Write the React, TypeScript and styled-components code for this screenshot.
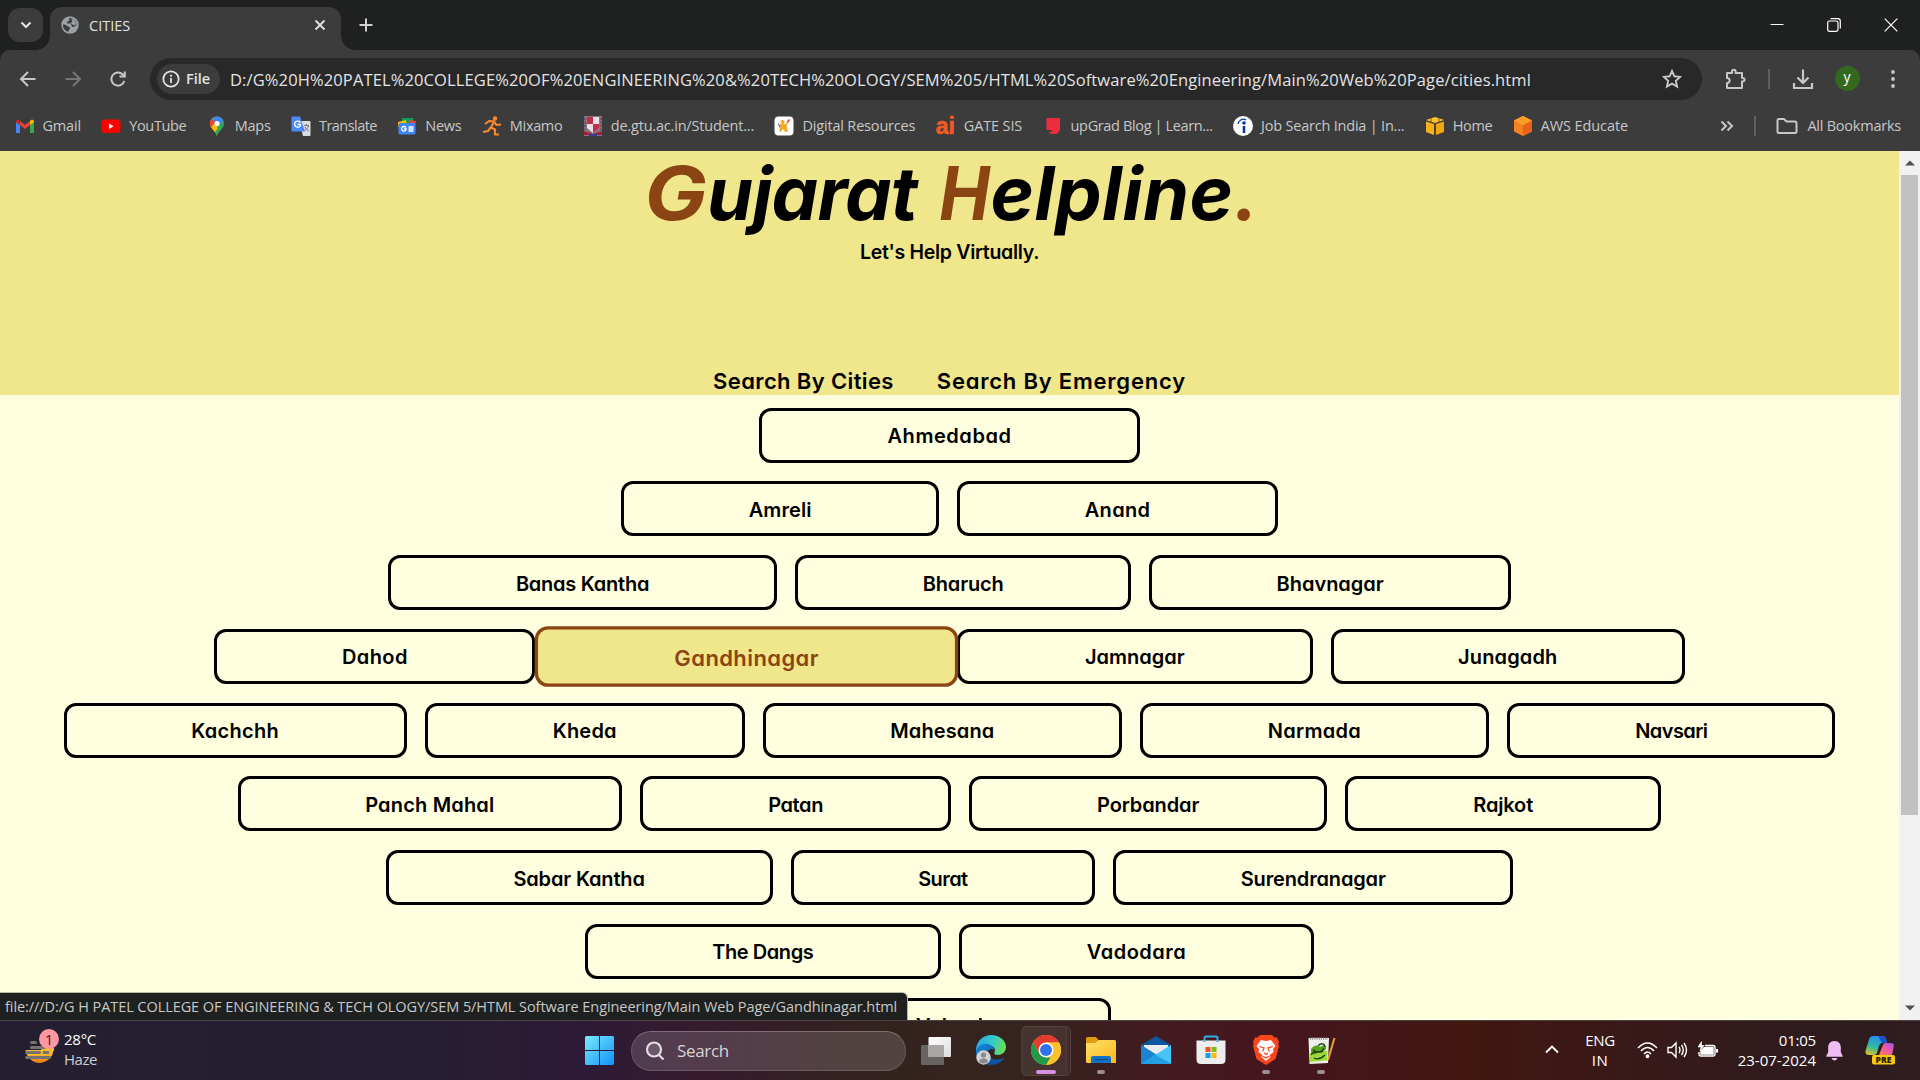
import React, { useLayoutEffect, useRef, useState } from "react";
import styled, { createGlobalStyle, css } from "styled-components";

const GlobalStyle = createGlobalStyle`
  * { box-sizing: border-box; }
  html, body { margin: 0; padding: 0; background: #1f2120; overflow: hidden; }
`;

const uiFont = `"Open Sans", "Noto Sans", sans-serif`;

/* ---------- text that spreads its letters over a given width ---------- */

const FitSpan = styled.span`
  display: inline-block;
  white-space: pre;
`;

function Fit({ text, width }: { text: string; width: number }) {
  const ref = useRef<HTMLSpanElement>(null);
  const [spacing, setSpacing] = useState(0);
  useLayoutEffect(() => {
    if (ref.current) {
      setSpacing((width - ref.current.offsetWidth) / text.length);
    }
  }, [text, width]);
  return (
    <FitSpan ref={ref} style={{ letterSpacing: spacing }}>
      {text}
    </FitSpan>
  );
}

/* ---------- browser frame ---------- */

const Screen = styled.div`
  width: 1920px;
  height: 1080px;
  display: flex;
  flex-direction: column;
  overflow: hidden;
  font-family: ${uiFont};
  background: #1f2120;
`;

const TabStrip = styled.div`
  height: 50px;
  flex: none;
  display: flex;
  align-items: flex-start;
  background: #1f2120;
`;

const TabSearch = styled.div`
  width: 35px;
  height: 34px;
  margin: 8px 7px 0 8px;
  border-radius: 12px;
  background: #3c3c3c;
  display: flex;
  align-items: center;
  justify-content: center;
`;

const Tab = styled.div`
  position: relative;
  width: 291px;
  height: 43px;
  margin-top: 7px;
  padding: 0 12px 7px 11px;
  border-radius: 12px 12px 0 0;
  background: #3c3c3c;
  display: flex;
  align-items: center;
  color: #e3e3e3;
  font-size: 14.5px;

  &::before,
  &::after {
    content: "";
    position: absolute;
    bottom: 0;
    width: 14px;
    height: 14px;
  }
  &::before {
    left: -14px;
    background: radial-gradient(circle at 0 0, transparent 13.5px, #3c3c3c 14px);
  }
  &::after {
    right: -14px;
    background: radial-gradient(circle at 100% 0, transparent 13.5px, #3c3c3c 14px);
  }
`;

const TabTitle = styled.div`
  flex: 1;
  margin-left: 10px;
`;

const NewTab = styled.div`
  margin: 17px 0 0 17px;
  height: 16px;
  display: flex;
`;

const WindowButtons = styled.div`
  margin-left: auto;
  height: 50px;
  display: flex;
  align-items: center;
  padding-right: 22px;
  gap: 43px;
`;

const Toolbar = styled.div`
  height: 101px;
  flex: none;
  background: #3c3c3c;
  border-radius: 10px 10px 0 0;
`;

const AddressRow = styled.div`
  height: 58px;
  display: flex;
  align-items: center;
  padding-left: 18px;
`;

const NavIcons = styled.div`
  width: 132px;
  display: flex;
  gap: 25px;
`;

const AddressBar = styled.div`
  width: 1552px;
  height: 42px;
  border-radius: 21px;
  background: #282828;
  display: flex;
  align-items: center;
  padding: 0 20px 0 7px;
`;

const FileChip = styled.div`
  width: 63px;
  height: 30px;
  border-radius: 15px;
  background: #3c3c3c;
  display: flex;
  align-items: center;
  padding: 0 0 1px 5px;
  gap: 6px;
  color: #e3e3e3;
  font-size: 14.5px;
  font-weight: 600;
`;

const UrlText = styled.div`
  flex: 1;
  margin-left: 10px;
  color: #e3e3e3;
  font-size: 16.5px;
  white-space: nowrap;
`;

const ToolIcons = styled.div`
  display: flex;
  align-items: center;
  margin-left: 22px;
`;

const Avatar = styled.div`
  width: 25px;
  height: 25px;
  margin: -1px 30px 0 21px;
  border-radius: 50%;
  background: #33691e;
  color: #fff;
  font-size: 14px;
  line-height: 22px;
  text-align: center;
`;

const Divider = styled.div<{ $h: number; $gap: string; $w?: number }>`
  width: ${(p) => p.$w ?? 1.5}px;
  height: ${(p) => p.$h}px;
  margin: ${(p) => p.$gap};
  background: #606060;
`;

const BookmarkRow = styled.div`
  height: 35px;
  display: flex;
  align-items: center;
  padding: 0 19px 0 14.500px;
  gap: 20.4px;
  color: #c7c7c7;
  font-size: 14.5px;
`;

const Bookmark = styled.div`
  display: flex;
  align-items: center;
  gap: 8px;
  svg { flex: none; }
`;

const BookmarkEnd = styled.div`
  margin-left: auto;
  display: flex;
  align-items: center;
`;

const AllBookmarks = styled.div`
  margin-left: 9px;
`;

/* ---------- page ---------- */

const Viewport = styled.div`
  position: relative;
  height: 869px;
  flex: none;
  display: flex;
`;

const Page = styled.main`
  width: 1899px;
  height: 869px;
  background: #ffffdf;
  font-family: Inter, "Open Sans", sans-serif;
  font-feature-settings: "cv11" 1, "ss03" 1;
  color: #000;
`;

const Header = styled.header`
  height: 244px;
  background: #f0e68c;
  display: flex;
  flex-direction: column;
  align-items: center;
`;

const Title = styled.h1`
  margin: 0;
  height: 88px;
  padding-left: 4px;
  display: flex;
  font-size: 74px;
  line-height: 84px;
  font-weight: 700;
  font-style: italic;
`;

const Accent = styled.span<{ $stretch?: number }>`
  color: #8b4513;
  transform: scaleX(${(p) => p.$stretch ?? 1});
`;

const WordGap = styled.span`
  width: 20px;
`;

const Tagline = styled.p`
  margin: 0;
  height: 26px;
  line-height: 26px;
  font-size: 19.5px;
  font-weight: 600;
`;

const Nav = styled.nav`
  margin-top: auto;
  height: 30px;
  display: flex;
  gap: 43px;
  font-size: 22px;
  line-height: 32px;
  font-weight: 600;
`;

const CityList = styled.section`
  height: 625px;
  overflow: hidden;
  padding-top: 12.6px;
  display: flex;
  flex-direction: column;
  gap: 18.75px;
`;

const CityRow = styled.div`
  flex: none;
  display: flex;
  justify-content: center;
  gap: 18.3px;
`;

const CityButton = styled.a<{ $w: number; $hover?: boolean }>`
  flex: none;
  width: ${(p) => p.$w}px;
  height: 55px;
  padding-top: 2px;
  border: 3px solid #000;
  border-radius: 12px;
  display: flex;
  align-items: center;
  justify-content: center;
  font-size: 20px;
  font-weight: 600;
  ${(p) =>
    p.$hover &&
    css`
      z-index: 1;
      color: #8b4513;
      background: #f0e68c;
      border-color: #8b4513;
      transform: scale(1.1);
    `}
`;

const Scrollbar = styled.div`
  width: 21px;
  background: #f1f1f1;
  display: flex;
  flex-direction: column;
  align-items: center;
`;

const ScrollArrow = styled.div`
  width: 21px;
  height: 24px;
  display: flex;
  align-items: center;
  justify-content: center;
`;

const ScrollThumb = styled.div`
  width: 17px;
  height: 640px;
  margin-bottom: auto;
  background: #c1c1c1;
`;

const StatusBubble = styled.div`
  position: absolute;
  left: 0;
  bottom: 0;
  width: 907px;
  height: 27px;
  padding-left: 5px;
  border-radius: 0 5px 0 0;
  background: #1f2120;
  box-shadow: 0 0 0 1px #b9b99f;
  color: #c7c7c7;
  font-size: 14.5px;
  line-height: 27px;
`;

/* ---------- taskbar ---------- */

const Taskbar = styled.footer`
  position: relative;
  height: 60px;
  flex: none;
  display: flex;
  align-items: center;
  border-top: 1px solid #4d4446;
  color: #fff;
  background: linear-gradient(90deg, #241f30 0, #261e32 430px, #2d1a37 580px, #371b2d 700px, #33231f 880px,
    #35231f 1020px, #44191f 1190px, #45161f 1290px, #41170f 1470px, #38191a 1640px, #2e1b1e 1830px, #2f1d20 1920px);
`;

const Weather = styled.div`
  width: 585px;
  padding: 0 0 4px 24px;
  display: flex;
  align-items: center;
`;

const Lines = styled.div<{ $align?: string }>`
  display: flex;
  flex-direction: column;
  align-items: ${(p) => p.$align ?? "flex-start"};
  font-size: 15px;
  line-height: 20px;
`;

const Dim = styled.span`
  color: #cfcdd2;
`;

const SearchBox = styled.div`
  width: 275px;
  height: 40px;
  margin: 0 15px 0 17px;
  padding-left: 13px;
  border-radius: 20px;
  border: 1px solid rgba(255, 255, 255, 0.13);
  border-top-color: rgba(255, 255, 255, 0.25);
  background: rgba(255, 255, 255, 0.15);
  display: flex;
  align-items: center;
  gap: 12px;
  color: #d9d2d6;
  font-size: 17px;
`;

const Apps = styled.div`
  margin-left: 15px;
  display: flex;
  gap: 5px;
`;

const AppSlot = styled.div<{ $active?: boolean }>`
  width: 50px;
  height: 50px;
  border-radius: 6px;
  display: flex;
  flex-direction: column;
  align-items: center;
  padding-top: 9px;
  ${(p) =>
    p.$active &&
    css`
      padding-top: 8px;
      border: 1px solid rgba(255, 255, 255, 0.08);
      background: linear-gradient(90deg, rgba(255, 255, 255, 0.08) 44px, rgba(255, 255, 255, 0.14) 44px, rgba(255, 255, 255, 0.04) 46px);
    `}
`;

const RunMark = styled.div<{ $w: number; $c: string }>`
  width: ${(p) => p.$w}px;
  height: 4px;
  margin-top: 5px;
  border-radius: 2px;
  background: ${(p) => p.$c};
`;

const Tray = styled.div`
  margin-left: auto;
  padding: 0 25px 2px 0;
  display: flex;
  align-items: center;
`;

const Language = styled.div`
  margin-left: 26px;
`;

const TrayIcons = styled.div`
  display: flex;
  align-items: center;
  gap: 9px;
  margin: 1px 20px 0 22px;
`;

const Bell = styled.svg`
  margin: 3px 22px 0 10px;
`;

/* ---------- icons ---------- */

const stroke = { fill: "none", stroke: "#c7c7c7", strokeWidth: 2 } as const;

const Back = () => (
  <svg width="20" height="20" viewBox="0 0 20 20" {...stroke}><path d="M17.500 10H3M10 3l-7 7 7 7" /></svg>
);
const Forward = () => (
  <svg width="20" height="20" viewBox="0 0 20 20" {...stroke} stroke="#777"><path d="M2.500 10H17M10 3l7 7-7 7" /></svg>
);
const Reload = () => (
  <svg width="20" height="20" viewBox="0 0 20 20" {...stroke}>
    <path d="M16.300 12A6.600 6.600 0 1 1 14.600 5.300L16.500 7.200" /><path d="M16.800 2.500V7.500H11.500" />
  </svg>
);

const Globe = () => (
  <svg width="18" height="18" viewBox="0 0 18 18">
    <circle cx="9" cy="9" r="8.700" fill="#9aa0a6" />
    <path d="M2 8.500c1.500 0 3 .3 4.200 1.500.8 1 2.800.3 2.800 2.200 0 1.300-1.500 1-1.500 3.600C4 15 1.800 12 2 8.500z" fill="#3c3c3c" />
    <path d="M8.500 2C7.500 3 9 4 7.800 5S5.500 5.500 6 7c.5 1.300 3 .2 4 1.300 1.200 1.200 0 2.200 1.500 2.600 1.500.3 1.500-1.500 3.800-1.200C16 5 12.500 2 8.500 2z" fill="#3c3c3c" />
    <path d="M10.500 2.500c-.5 1.500 1.500 2 .5 3.500s-2 .5-2.500 1 2 .3 3 1.500 2 .8 3.500 0C15 5 13 3 10.500 2.500z" fill="#9aa0a6" />
  </svg>
);

const bookmarkIcons: Record<string, React.ReactNode> = {
  gmail: (
    <>
      <path d="M1 5v12h4V9l5 4 5-4v8h4V5l-2-1.500L10 9 3 3.500z" fill="#ea4335" />
      <path d="M1 6v11h4V9z" fill="#4285f4" /><path d="M15 9v8h4V6z" fill="#34a853" />
      <path d="M15 9V5l2-1.500L19 5v1z" fill="#fbbc04" /><path d="M1 6V5l2-1.500L5 5v4z" fill="#c5221f" />
    </>
  ),
  youtube: (
    <><rect x=".5" y="3.500" width="19" height="13.500" rx="3.500" fill="#f00" /><path d="M8 7.500v5.500l4.700-2.750z" fill="#fff" /></>
  ),
  maps: (
    <>
      <path d="M10 20c-.9-4.500-7-7.500-7-12.500A7 7 0 0 1 10 .5z" fill="#fbbc04" />
      <path d="M10 .5a7 7 0 0 1 7 7C17 12.500 10.900 15.500 10 20l-2.500-5.500z" fill="#34a853" />
      <path d="M4.500 3.500A7 7 0 0 1 10 .5c3 0 5 1.500 6.300 4L10 12z" fill="#4285f4" />
      <path d="M3 7.500c0-1.500.5-3 1.500-4.200L10 7l-5.500 5C3.500 10.700 3 9 3 7.500z" fill="#ea4335" />
      <path d="M4 11l4-4 3 5-3 4z" fill="#fbbc04" /><circle cx="10" cy="7.500" r="2.600" fill="#fff" />
    </>
  ),
  translate: (
    <>
      <path d="M8 5h10.500a1 1 0 0 1 1 1v13a1 1 0 0 1-1 1H12z" fill="#dadce0" />
      <path d="M1.500.5H9l5 15H1.500a1 1 0 0 1-1-1v-13a1 1 0 0 1 1-1z" fill="#4c8bf5" />
      <path d="M9.500 6.800A3.100 3.100 0 1 0 9.500 9.500V8.500H6.500" fill="none" stroke="#fff" strokeWidth="1.300" />
      <path d="M13 9.500h5M15.500 8v1.500M17.500 9.500c-.5 2.500-2 4-3.500 5M14 11c.7 1.700 2 3 4 4" stroke="#777" fill="none" />
    </>
  ),
  news: (
    <>
      <path d="M5 2h11v6H5z" fill="#0f9d58" /><path d="M1 6l8-2 1 5-9 2z" fill="#fbbc04" /><path d="M12 4l7 1-1 5-6-1z" fill="#ea4335" />
      <rect x="1.500" y="7" width="17" height="11.500" rx="1.500" fill="#4285f4" />
      <path d="M8.800 11.500a2.300 2.300 0 1 0 .4 1.500H7M11.500 11h5M11.500 13h5M11.500 15h5" stroke="#fff" strokeWidth="1.300" fill="none" />
    </>
  ),
  mixamo: (
    <>
      <circle cx="13" cy="2.500" r="2.200" fill="#f7892b" />
      <path d="M3 8l4-3 5 .5-3 6 4 2v6M9 11l-3 4-5 1M12 6l2.500 3L19 8.500M17 18.500h-4" stroke="#f7892b" strokeWidth="2.100" fill="none" />
    </>
  ),
  gtu: (
    <>
      <path d="M1 0h18v20H1z" fill="#87727d" /><path d="M4 1h12v11l-6 5-6-5z" fill="#eadfe2" />
      <path d="M4 1h6v7H4zM10 8h6v4l-6 5z" fill="#bd3048" /><path d="M1 15l9 3 9-3v4H1z" fill="#a0203a" /><path d="M6 18h8v2H6z" fill="#393c9c" />
      <path d="M2 2v12M18 2v12" stroke="#5d4c64" strokeWidth="1.500" strokeDasharray="2 1.500" />
    </>
  ),
  digital: (
    <>
      <rect x=".5" y=".5" width="19" height="19" rx="4" fill="#fff" />
      <circle cx="8.500" cy="6" r="2" fill="#f5a623" />
      <path d="M5.500 9l3-1.500 3 .5 3-2.500-2 4.500 1.500 5.500-2.500.5-2.500-3-2.500 3-1.500-1 1.500-4z" fill="#f5a623" /><path d="M13 6.500l2.500-3" stroke="#e33" strokeWidth="1.500" /><path d="M4.500 7.500l1.500 4" stroke="#555" />
    </>
  ),
  upgrad: <path d="M3.500 2h13.500v10.500A5.500 5.500 0 0 1 11.500 18C9 18 7 17.800 5.500 16.500c2 0 3.500-.8 3.500-2.500H3.500z" fill="#ee2c3c" />,
  job: (
    <>
      <circle cx="10" cy="10" r="10" fill="#fff" /><circle cx="11" cy="7" r="1.800" fill="#003a9b" />
      <path d="M11 10v7" stroke="#003a9b" strokeWidth="2.600" /><path d="M5 8c.5-4 5-6 8-4" stroke="#003a9b" fill="none" strokeWidth="1.300" />
    </>
  ),
  home: (
    <>
      <path d="M1 4l9-3 9 3-9 3z" fill="#ffc12e" /><path d="M1 5.500l8 2.500v11l-8-3z" fill="#f5b01c" /><path d="M19 5.500L11 8v11l8-3z" fill="#f0a80e" />
      <path d="M6 2.500v4M14 2.500v4M10 7v12" stroke="#6b4b00" strokeWidth=".8" />
    </>
  ),
  aws: (
    <>
      <path d="M10 0l9 4.500v11L10 20l-9-4.500v-11z" fill="#f58220" /><path d="M10 9l9-4.500v11L10 20z" fill="#e8621b" /><path d="M10 0l9 4.500L10 9 1 4.500z" fill="#ff9d2a" />
    </>
  ),
};

const AiMark = styled.span`
  width: 20px;
  color: #f15a24;
  font-family: "Liberation Sans", sans-serif;
  font-weight: 700;
  font-size: 23px;
  line-height: 20px;
  -webkit-text-stroke: 0.6px #f15a24;
`;

const bookmarks = [
  { icon: "gmail", text: "Gmail", w: 38 },
  { icon: "youtube", text: "YouTube", w: 57.5 },
  { icon: "maps", text: "Maps", w: 36 },
  { icon: "translate", text: "Translate", w: 58 },
  { icon: "news", text: "News", w: 36 },
  { icon: "mixamo", text: "Mixamo", w: 53 },
  { icon: "gtu", text: "de.gtu.ac.in/Student...", w: 143.5 },
  { icon: "digital", text: "Digital Resources", w: 113 },
  { icon: "ai", text: "GATE SIS", w: 58 },
  { icon: "upgrad", text: "upGrad Blog | Learn...", w: 142 },
  { icon: "job", text: "Job Search India | In...", w: 143 },
  { icon: "home", text: "Home", w: 39.5 },
  { icon: "aws", text: "AWS Educate", w: 87 },
];

/* ---------- taskbar app icons ---------- */

const EdgeIcon = () => (
  <svg width="30" height="30" viewBox="0 0 30 30">
    <defs>
      <linearGradient id="eg1" x1="0" x2="1" y1=".3" y2=".5"><stop offset="0" stopColor="#2ca6e8" /><stop offset=".55" stopColor="#35c9c8" /><stop offset="1" stopColor="#6be04f" /></linearGradient>
      <linearGradient id="eg2" x1="0" x2=".6" y1="0" y2="1"><stop offset="0" stopColor="#1689dc" /><stop offset="1" stopColor="#0c4f9e" /></linearGradient>
    </defs>
    <path d="M0 14C1 5 8 0 15 0c9 0 15 6 15 12 0 5-4 8-8.500 8-3 0-4-1.500-3-3 1.500-3-.5-6-5-6-6 0-11 3-13.500 8z" fill="url(#eg1)" />
    <path d="M0 16C2 10 7 8 12 9c4 .8 6 4 6 6-2-2-5-1-6 1.500-1 4 3 8 8 8 4 0 7-1.500 8-1.500C26 27 21 30 15 30 6 30-1 24 0 16z" fill="url(#eg2)" />
    <circle cx="7.500" cy="22.500" r="7.200" fill="#d2d2d2" /><circle cx="7.500" cy="20" r="2.600" fill="#8a8a8a" /><path d="M3 27c0-5 9-5 9 0-3 2-6 2-9 0z" fill="#8a8a8a" />
  </svg>
);
const ChromeIcon = () => (
  <svg width="30" height="30" viewBox="0 0 30 30">
    <circle cx="15" cy="15" r="15" fill="#fbc12d" />
    <path d="M15 15L8.500 18.800 2 7.500A15 15 0 0 1 28 7.500H15z" fill="#e33b2e" />
    <path d="M2 7.500L8.500 18.800 15 22.500h6L15 30A15 15 0 0 1 2 7.500z" fill="#229a48" />
    <path d="M21.500 18.800L15 30A15 15 0 0 0 28 7.500H15z" fill="#fbc12d" />
    <circle cx="15" cy="15" r="7.500" fill="#fff" /><circle cx="15" cy="15" r="6" fill="#2f73ea" />
  </svg>
);
const FolderIcon = () => (
  <svg width="30" height="30" viewBox="0 0 30 30">
    <defs><linearGradient id="fo" x1="0" x2="1" y1="0" y2="1"><stop stopColor="#ffdf6b" /><stop offset="1" stopColor="#fcb817" /></linearGradient></defs>
    <path d="M0 3.500Q0 2 1.500 2H10l3 3.500H15V12H0z" fill="#e09b10" />
    <path d="M0 8h9l4-3h15.500q1.500 0 1.500 1.500V28H1.500Q0 28 0 26.500z" fill="url(#fo)" />
    <path d="M5 28v-5q0-2 2-2h16q2 0 2 2v5z" fill="#1172c4" /><path d="M8.500 24.500h13" stroke="#0a4e8f" strokeWidth="1.200" />
  </svg>
);
const MailIcon = () => (
  <svg width="30" height="30" viewBox="0 0 30 30">
    <path d="M0 10L15 1l15 9v6H0z" fill="#0d579f" /><path d="M3 10h24v8l-12 6-12-6z" fill="#ececec" />
    <path d="M0 10l30 19H1.500Q0 29 0 27.500z" fill="#2093dd" /><path d="M30 10L14 20l16 9z" fill="#45c4f5" /><path d="M0 10l15 9.500L0 29z" fill="#1c85d3" /><path d="M0 29l14-9.500L30 29z" fill="#239fe3" />
  </svg>
);
const StoreIcon = () => (
  <svg width="30" height="30" viewBox="0 0 30 30">
    <path d="M8.500 7V3q0-1.500 1.500-1.500h10q1.500 0 1.500 1.500v4" fill="none" stroke="#2baeea" strokeWidth="2" />
    <path d="M.5 5.500h29v19q0 4.500-4.500 4.500H5q-4.500 0-4.500-4.500z" fill="#ededed" />
    <path d="M9.500 12h5v5h-5z" fill="#f0512a" /><path d="M15.500 12h5v5h-5z" fill="#80ba12" /><path d="M9.500 18h5v5h-5z" fill="#12a2e8" /><path d="M15.500 18h5v5h-5z" fill="#fdb90c" />
    <path d="M8.500 5.500V7M21.500 5.500V7" stroke="#2baeea" strokeWidth="2" />
  </svg>
);
const BraveIcon = () => (
  <svg width="30" height="30" viewBox="0 0 30 30">
    <path d="M9 0h12l2.500 2.500H26L28 7l-.8 2 .8 2-3.500 13L15 30l-9.500-6L2 11l.8-2L2 7l2-4.500h2.500z" fill="#f9471d" />
    <path d="M15 6l5-1 4.500 6-2.500 3 .5 3-4 3 1 2-4.500 4-4.500-4 1-2-4-3 .5-3-2.500-3L10 5z" fill="#fff" />
    <path d="M8 11.500l5 1.500-1.300 3.500M22 11.500l-5 1.500 1.300 3.500M13 18l2 1.500 2-1.500M11.500 21l3.500 2 3.500-2" stroke="#f9471d" strokeWidth="1.300" fill="none" />
  </svg>
);
const NotepadIcon = () => (
  <svg width="30" height="30" viewBox="0 0 30 30">
    <path d="M2.500 3H23l-1 25-18.500 1z" fill="#eef0ec" /><path d="M4 18q8-4 17.500-2l-.5 9.500L4 27z" fill="#9bdb39" />
    <path d="M5 14q4-6 9-2c5-4 8 1 5 3s-7 1-8 3-4 2-6 0z" fill="#57a51b" />
    <path d="M5 20c4-6 9-1 12-4M8 23c4 2 8 0 11-3M7 15c3 3 9 3 11-2M12 11c3-4 7-2 7 1" stroke="#1f3a17" fill="none" strokeWidth="1.300" />
    <path d="M4 3.500h18" stroke="#888" strokeWidth="2.500" strokeDasharray="1 1.200" /><path d="M28.500 3L22 25" stroke="#e2a231" strokeWidth="2" />
  </svg>
);

const grayMark = "#9b8d90";

const apps = [
  { Icon: EdgeIcon },
  { Icon: ChromeIcon, active: true, mark: 20, color: "#d893e0" },
  { Icon: FolderIcon, mark: 8, color: grayMark },
  { Icon: MailIcon },
  { Icon: StoreIcon },
  { Icon: BraveIcon, mark: 8, color: grayMark },
  { Icon: NotepadIcon, mark: 8, color: grayMark },
];

/* ---------- cities ---------- */

type City = [name: string, box: number, text: number];

const cityRows: City[][] = [
  [["Ahmedabad", 380.6, 124]],
  [["Amreli", 317.7, 62.5], ["Anand", 320.4, 65.5]],
  [["Banas Kantha", 388.9, 133], ["Bharuch", 335.8, 81], ["Bhavnagar", 361.5, 107]],
  [["Dahod", 320.8, 66], ["Gandhinagar", 385.2, 131], ["Jamnagar", 355.6, 100], ["Junagadh", 353.6, 99]],
  [["Kachchh", 343.1, 88], ["Kheda", 319.6, 64], ["Mahesana", 359, 104], ["Narmada", 348.8, 93], ["Navsari", 328.3, 72]],
  [["Panch Mahal", 384, 129], ["Patan", 311, 55], ["Porbandar", 357.5, 102], ["Rajkot", 316, 60]],
  [["Sabar Kantha", 386.9, 131], ["Surat", 304, 49], ["Surendranagar", 400.2, 145]],
  [["The Dangs", 355.8, 101], ["Vadodara", 355.2, 99]],
  [["Valsad", 322, 67]],
];

export default function App() {
  return (
    <Screen>
      <GlobalStyle />
      <TabStrip>
        <TabSearch>
          <svg width="12" height="8" viewBox="0 0 12 8" {...stroke} stroke="#e3e3e3"><path d="M1.500 1.500L6 6l4.500-4.500" /></svg>
        </TabSearch>
        <Tab>
          <Globe />
          <TabTitle><Fit text="CITIES" width={41} /></TabTitle>
          <svg width="18" height="18" viewBox="0 0 18 18" {...stroke} stroke="#e3e3e3" strokeWidth="1.800"><path d="M4.500 4.500l9 9M13.500 4.500l-9 9" /></svg>
        </Tab>
        <NewTab>
          <svg width="16" height="16" viewBox="0 0 16 16" {...stroke} stroke="#d0d0d0"><path d="M8 1.500v13M1.500 8h13" /></svg>
        </NewTab>
        <WindowButtons>
          <svg width="14" height="14" viewBox="0 0 14 14" {...stroke} stroke="#fff" strokeWidth="1"><path d="M.5 6.500h13" /></svg>
          <svg width="14" height="14" viewBox="0 0 14 14" {...stroke} stroke="#fff" strokeWidth="1.200">
            <rect x=".7" y="3" width="10.300" height="10.300" rx="1.700" /><path d="M3.500 .7h7.300q2.500 0 2.500 2.500v7.300" />
          </svg>
          <svg width="14" height="14" viewBox="0 0 14 14" {...stroke} stroke="#fff" strokeWidth="1.200"><path d="M.7.7l12.600 12.600M13.300.7L.7 13.300" /></svg>
        </WindowButtons>
      </TabStrip>

      <Toolbar>
        <AddressRow>
          <NavIcons><Back /><Forward /><Reload /></NavIcons>
          <AddressBar>
            <FileChip>
              <svg width="18" height="18" viewBox="0 0 18 18" {...stroke} stroke="#e3e3e3" strokeWidth="1.800"><circle cx="9" cy="9" r="7.700" /><path d="M9 8v5M9 4.800v1.900" /></svg>
              <Fit text="File" width={24} />
            </FileChip>
            <UrlText>
              <Fit
                text="D:/G%20H%20PATEL%20COLLEGE%20OF%20ENGINEERING%20&%20TECH%20OLOGY/SEM%205/HTML%20Software%20Engineering/Main%20Web%20Page/cities.html"
                width={1301}
              />
            </UrlText>
            <svg width="20" height="20" viewBox="0 0 20 20" {...stroke} strokeWidth="1.900"><path d="M10 2l2.400 5.300 5.800.6-4.400 3.900 1.300 5.700L10 14.600l-5.100 2.900 1.300-5.700L1.800 7.900l5.800-.6z" /></svg>
          </AddressBar>
          <ToolIcons>
            <svg width="22" height="22" viewBox="0 0 22 22" {...stroke}><path d="M3 5h5V3.500a1.800 1.800 0 0 1 3.600 0V5H18v5h.7a1.800 1.800 0 0 1 0 3.600H18V20H3v-5c3.500 0 3.500-5 0-5z" strokeLinejoin="round" /></svg>
            <Divider $h={20} $gap="0 22px 0 22px" />
            <svg width="22" height="22" viewBox="0 0 22 22" {...stroke} strokeWidth="2.200"><path d="M11 1.500v13M5.500 9.500L11 15l5.500-5.500M2 15v5h18v-5" /></svg>
            <Avatar>y</Avatar>
            <svg width="6" height="20" viewBox="0 0 6 20" fill="#c7c7c7"><circle cx="3" cy="3" r="1.900" /><circle cx="3" cy="10" r="1.900" /><circle cx="3" cy="17" r="1.900" /></svg>
          </ToolIcons>
        </AddressRow>
        <BookmarkRow>
          {bookmarks.map((b) => (
            <Bookmark key={b.text}>
              {b.icon === "ai" ? <AiMark>ai</AiMark> : <svg width="20" height="20" viewBox="0 0 20 20">{bookmarkIcons[b.icon]}</svg>}
              <Fit text={b.text} width={b.w} />
            </Bookmark>
          ))}
          <BookmarkEnd>
            <svg width="14" height="12" viewBox="0 0 14 12" {...stroke}><path d="M1.500 1.500L6 6l-4.500 4.500M7.500 1.500L12 6l-4.500 4.500" /></svg>
            <Divider $h={20} $gap="0 20px 0 20px" $w={2} />
            <svg width="22" height="18" viewBox="0 0 22 18" {...stroke}><path d="M1.500 3.500q0-1.500 1.500-1.500h5l2.500 2.500H19q1.500 0 1.500 1.500v8.500q0 1.500-1.500 1.500H3q-1.500 0-1.500-1.500z" /></svg>
            <AllBookmarks><Fit text="All Bookmarks" width={94} /></AllBookmarks>
          </BookmarkEnd>
        </BookmarkRow>
      </Toolbar>

      <Viewport>
        <Page>
          <Header>
            <Title>
              <Accent $stretch={1.12}><Fit text="G" width={60} /></Accent>
              <Fit text="ujarat" width={210} />
              <WordGap />
              <Accent $stretch={0.92}><Fit text="H" width={53} /></Accent>
              <Fit text="elpline" width={243} />
              <Accent><Fit text="." width={22} /></Accent>
            </Title>
            <Tagline><Fit text="Let's Help Virtually." width={179} /></Tagline>
            <Nav>
              <Fit text="Search By Cities" width={181} />
              <Fit text="Search By Emergency" width={249} />
            </Nav>
          </Header>
          <CityList>
            {cityRows.map((row, i) => (
              <CityRow key={i}>
                {row.map(([name, box, text]) => (
                  <CityButton key={name} $w={box} $hover={name === "Gandhinagar"}>
                    <Fit text={name} width={text} />
                  </CityButton>
                ))}
              </CityRow>
            ))}
          </CityList>
        </Page>
        <Scrollbar>
          <ScrollArrow><svg width="10" height="6" viewBox="0 0 10 6"><path d="M0 5.500h10L5 .5z" fill="#505050" /></svg></ScrollArrow>
          <ScrollThumb />
          <ScrollArrow><svg width="10" height="6" viewBox="0 0 10 6"><path d="M0 .5h10L5 5.500z" fill="#505050" /></svg></ScrollArrow>
        </Scrollbar>
        <StatusBubble>
          <Fit
            text="file:///D:/G H PATEL COLLEGE OF ENGINEERING & TECH OLOGY/SEM 5/HTML Software Engineering/Main Web Page/Gandhinagar.html"
            width={892}
          />
        </StatusBubble>
      </Viewport>

      <Taskbar>
        <Weather>
          <svg width="40" height="40" viewBox="0 0 40 40">
            <defs><linearGradient id="sun" x1="0" x2="0" y1="0" y2="1"><stop offset=".4" stopColor="#f8bb2c" /><stop offset="1" stopColor="#ee7a12" /></linearGradient></defs>
            <path d="M1.500 21h28A14 14 0 0 1 2.500 25zM17 19h13v3H17z" fill="url(#sun)" />
            <path d="M7.500 13.500h4M7.500 18.500h13M2.500 23.500h13M20 23.500h4M2.500 28.500h23" stroke="#77716f" strokeWidth="3" strokeLinecap="round" />
            <circle cx="25" cy="10" r="10" fill="#ff97a3" />
            <text x="25" y="15.500" fontSize="15" textAnchor="middle" fill="#3a2025" fontFamily="Open Sans">1</text>
          </svg>
          <Lines><Fit text="28°C" width={32} /><Dim><Fit text="Haze" width={33} /></Dim></Lines>
        </Weather>
        <svg width="29" height="29" viewBox="0 0 29 29">
          <defs><linearGradient id="win" x1="0" x2="1" y1="0" y2="1"><stop stopColor="#7deafd" /><stop offset="1" stopColor="#0d92f8" /></linearGradient></defs>
          <path d="M1 0h13v14H0V1zM15 0h13l1 1v13H15zM0 15h14v14H1l-1-1zM15 15h14v13l-1 1H15z" fill="url(#win)" />
        </svg>
        <SearchBox>
          <svg width="20" height="20" viewBox="0 0 20 20" {...stroke} stroke="#e4dde1" strokeWidth="2.200"><circle cx="9" cy="8.500" r="7" fill="rgba(255,255,255,.15)" /><path d="M13.500 13.500l5 5" /></svg>
          <Fit text="Search" width={52} />
        </SearchBox>
        <svg width="30" height="30" viewBox="0 0 30 30">
          <defs><linearGradient id="tv" x1="0" x2="1" y1="0" y2="1"><stop stopColor="#fff" /><stop offset="1" stopColor="#dcdcdc" /></linearGradient></defs>
          <rect x="0" y="9" width="23" height="20" rx="1" fill="#666361" /><rect x="7.500" y="1" width="22.500" height="20" rx="1" fill="url(#tv)" /><path d="M7.500 9H23v12H7.500z" fill="#a9a6a5" />
        </svg>
        <Apps>
          {apps.map(({ Icon, active, mark, color }, i) => (
            <AppSlot key={i} $active={active}>
              <Icon />
              {mark && <RunMark $w={mark} $c={color!} />}
            </AppSlot>
          ))}
        </Apps>
        <Tray>
          <svg width="14" height="9" viewBox="0 0 14 9" {...stroke} stroke="#fff" strokeWidth="1.800"><path d="M1 7.500l6-6 6 6" /></svg>
          <Language><Lines $align="center"><Fit text="ENG" width={30} /><Fit text="IN" width={16} /></Lines></Language>
          <TrayIcons>
            <svg width="21" height="18" viewBox="0 0 21 18" {...stroke} stroke="#fff" strokeWidth="1.500"><path d="M1 7q9.500-10 19 0M4 10q6.500-7 13 0M7 13q3.500-4 7 0" /><circle cx="10.500" cy="15.300" r="1.200" fill="#fff" /></svg>
            <svg width="21" height="18" viewBox="0 0 21 18" {...stroke} stroke="#fff" strokeWidth="1.400"><path d="M1 6.500h3.500L9 2v14l-4.500-4.500H1zM12 6q2 3 0 6M14.500 4q3.500 5 0 10M17 2q5 7 0 14" /></svg>
            <svg width="21" height="18" viewBox="0 0 21 18" {...stroke} stroke="#fff" strokeWidth="1.400"><path d="M8 4.500h8q2 0 2 2v6.500q0 2-2 2H4q-2 0-2-2v-2" /><path d="M7.500 6.500H16v6.500H4V10z" fill="#fff" /><path d="M4.500.5L1 6h3l-1 4 4-5.500H4.500z" fill="#fff" strokeWidth=".6" /><path d="M20 8v3.500" strokeWidth="2" /></svg>
          </TrayIcons>
          <Lines $align="flex-end"><Fit text="01:05" width={37} /><Fit text="23-07-2024" width={78} /></Lines>
          <Bell width="17" height="20" viewBox="0 0 17 20"><path d="M8.500 0C4 0 2.200 3 2.200 6.500V11L.3 15v.8h16.400V15l-1.900-4V6.500C14.800 3 13 0 8.500 0zM5.500 17h6q-1 2.500-3 2.500t-3-2.500z" fill="#efbcf4" /></Bell>
          <svg width="30" height="30" viewBox="0 0 30 30">
            <defs>
              <linearGradient id="cp1" x1=".3" x2="0" y1="0" y2="1"><stop stopColor="#2494ef" /><stop offset=".5" stopColor="#2fb9a0" /><stop offset="1" stopColor="#f4c51b" /></linearGradient>
              <linearGradient id="cp2" x1="1" x2="0" y1="0" y2="1"><stop stopColor="#a44df0" /><stop offset=".5" stopColor="#ee5aa0" /><stop offset="1" stopColor="#f7854a" /></linearGradient>
            </defs>
            <path d="M8 1h9q3 0 4 3l1 4h-5q-2 0-3 3l-2 7q-1 2-3 2H4q-4 0-3.500-4L4 4.500Q5 1 8 1z" fill="url(#cp1)" />
            <path d="M13 1h4q3 0 4 3l1 4h-5z" fill="#1c53c8" />
            <path d="M20 8h6q3.500 0 2.700 4L27 20H14l3.500-9q1-3 2.500-3z" fill="url(#cp2)" />
            <rect x="7" y="20" width="23" height="9.500" rx="2" fill="#fcc810" />
            <text x="18.500" y="27.700" fontSize="8.500" fontWeight="800" textAnchor="middle" fill="#2b2000" fontFamily="Open Sans">PRE</text>
          </svg>
        </Tray>
      </Taskbar>
    </Screen>
  );
}
